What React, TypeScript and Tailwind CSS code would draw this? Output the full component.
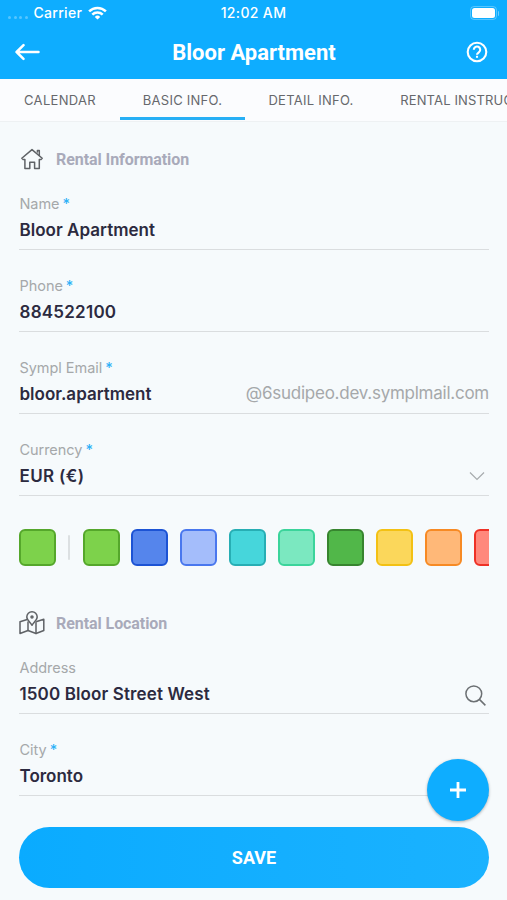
import React, { useState } from 'react';

interface Swatch {
    fill: string;
    border: string;
}

interface FieldProps {
    label: string;
    value: string;
    required?: boolean;
    valueClass?: string;
    children?: React.ReactNode;
}

const tabs = [
    { name: 'CALENDAR', className: 'w-[120px] tracking-[0.3px]' },
    { name: 'BASIC INFO.', className: 'w-[125px] tracking-[0.25px]' },
    { name: 'DETAIL INFO.', className: 'w-[132px] tracking-[0.25px]' },
    { name: 'RENTAL INSTRUCTIONS', className: 'w-[200px] tracking-[0.15px]' },
];

const swatches: Swatch[] = [
    { fill: 'bg-[#7dd24b]', border: 'border-[#55a72b]' },
    { fill: 'bg-[#5585ec]', border: 'border-[#1c53d4]' },
    { fill: 'bg-[#a4bdfb]', border: 'border-[#4977ee]' },
    { fill: 'bg-[#46d6db]', border: 'border-[#27aeb4]' },
    { fill: 'bg-[#7be8c0]', border: 'border-[#3bd49b]' },
    { fill: 'bg-[#51b749]', border: 'border-[#37852f]' },
    { fill: 'bg-[#fbd75b]', border: 'border-[#f3c114]' },
    { fill: 'bg-[#ffb878]', border: 'border-[#f78a24]' },
    { fill: 'bg-[#ff887c]', border: 'border-[#ee3126]' },
];

const HomeIcon = () => (
    <svg width="24" height="24" viewBox="0 0 24 24" fill="none" stroke="#5f6266" strokeWidth="1.5" strokeLinejoin="round" strokeLinecap="round" className="ml-px shrink-0">
        <path d="M1.8 11.2 12 2.6l10.2 8.6-1.2 1.3h-1.7v8.9h-4.7v-6.2h-4.8v6.2H4.9v-8.9H3.1z" />
        <path d="M17.4 5V3.4h1.9v5" />
    </svg>
);

const MapIcon = () => (
    <svg width="26" height="24" viewBox="0 0 26 24" fill="none" stroke="#5f6266" strokeWidth="1.5" strokeLinejoin="round" strokeLinecap="round" className="shrink-0">
        <path d="M8.2 8.5 1 10.8v11.7l8-3 8 3 7.8-3V8.2l-7 2.3" />
        <path d="M9 11v8.5M17 11.5v11" />
        <path d="M13 14.2C10.5 10.7 7.8 8.7 7.8 6a5.2 5.2 0 0 1 10.4 0c0 2.7-2.7 4.7-5.2 8.2z" fill="#f6fafc" />
        <circle cx="13" cy="6" r="1" />
    </svg>
);

const SectionTitle = ({ icon, title }: { icon: React.ReactNode; title: string }) => (
    <div className="flex h-[18px] items-center">
        <div className="flex w-[37px] shrink-0">{icon}</div>
        <h2 className="pt-px font-[Roboto,sans-serif] text-[16px] leading-[18px] font-bold tracking-[-0.07px] text-[#a9aaba]">{title}</h2>
    </div>
);

const Field = ({ label, value, required, valueClass, children }: FieldProps) => (
    <div className="mt-6 h-[58px] border-b border-[#dadddf]">
        <div className="h-[22px] pl-[0.5px] text-[14.5px] leading-[24px] tracking-[-0.05px] text-[#a5a8aa]">
            {label} {required && <span className="-ml-px font-medium text-[#2db1f7]">*</span>}
        </div>
        <div className="flex h-[31px] items-center justify-between">
            <span className={`pl-[0.5px] text-[17px] leading-[30px] font-semibold text-[#2c2a40] ${valueClass || ''}`}>{value}</span>
            {children}
        </div>
    </div>
);

const App: React.FC = () => {
    const [activeTab, setActiveTab] = useState<string>('BASIC INFO.');

    return (
        <div className="relative h-[900px] w-[507px] overflow-hidden bg-[#f6fafc] font-[Inter,sans-serif]">
            <header className="h-[79px] bg-[#0eadff] text-white">
                {/* Status bar */}
                <div className="grid h-[26px] grid-cols-3 items-center px-2">
                    <div className="flex items-center">
                        <div className="mt-2 mr-[6px] flex gap-[2.5px]">
                            <i className="size-[3px] rounded-full bg-white/30" />
                            <i className="size-[3px] rounded-full bg-white/30" />
                            <i className="size-[3px] rounded-full bg-white/30" />
                            <i className="size-[3px] rounded-full bg-white/30" />
                        </div>
                        <span className="text-[14px] leading-5 font-medium tracking-[0.3px]">Carrier</span>
                        <svg width="19" height="14" viewBox="0 0 19 14" fill="none" stroke="white" strokeWidth="2.5" className="ml-1.5">
                            <path d="M1.1 5.4a12 12 0 0 1 16.8 0" />
                            <path d="M4.3 8.7a7.4 7.4 0 0 1 10.4 0" />
                            <path d="M9.5 13.6 6.8 10.9a3.8 3.8 0 0 1 5.4 0z" fill="white" stroke="none" />
                        </svg>
                    </div>
                    <span className="text-center text-[14px] leading-5 font-medium tracking-[0.35px]">12:02 AM</span>
                    <div className="flex items-center justify-end gap-px">
                        <div className="h-[14px] w-[27px] rounded-[4px] border border-white/30 p-px">
                            <div className="h-full rounded-[2.5px] bg-white" />
                        </div>
                        <div className="h-[5px] w-[1.5px] rounded-r-full bg-white/40" />
                    </div>
                </div>
                {/* Title bar */}
                <div className="flex h-[52px] items-center justify-between pr-[19px] pl-[15px]">
                    <button className="w-[25px]">
                        <svg width="25" height="18" viewBox="0 0 25 18" fill="none" stroke="white" strokeWidth="2.5" strokeLinecap="round" strokeLinejoin="round">
                            <path d="M23.5 9h-22M8.5 2.2 1.6 9l6.9 6.8" />
                        </svg>
                    </button>
                    <h1 className="pl-[2px] font-[Roboto,sans-serif] text-[22px] font-bold">Bloor Apartment</h1>
                    <button>
                        <svg width="22" height="22" viewBox="0 0 22 22" fill="none" stroke="white" strokeWidth="2.1">
                            <circle cx="11" cy="11" r="9.3" />
                            <path d="M7.8 8.8a3.2 3.2 0 1 1 5.2 2.4c-1.2.9-2 1.3-2 2.5" />
                            <path d="M11 14.8v2" />
                        </svg>
                    </button>
                </div>
            </header>

            <nav className="flex h-[43px] overflow-hidden border-b border-[#eef1f3] bg-[#fbfcfe]">
                {tabs.map((tab) => (
                    <button
                        key={tab.name}
                        onClick={() => setActiveTab(tab.name)}
                        className={`h-[41px] shrink-0 border-b-[3px] pt-[5px] text-[13px] whitespace-nowrap text-[#66686c] ${tab.className} ${activeTab === tab.name ? 'border-[#27aff5]' : 'border-transparent'}`}
                    >
                        {tab.name}
                    </button>
                ))}
            </nav>

            <main className="pt-7 pr-[18px] pl-[19px]">
                <SectionTitle icon={<HomeIcon />} title="Rental Information" />
                <Field label="Name" value="Bloor Apartment" valueClass="tracking-[0.03px]" required />
                <Field label="Phone" value="884522100" valueClass="tracking-[0.25px]" required />
                <Field label="Sympl Email" value="bloor.apartment" required>
                    <span className="text-[17px] tracking-[-0.25px] text-[#a5a8aa]">@6sudipeo.dev.symplmail.com</span>
                </Field>
                <Field label="Currency" value="EUR (€)" valueClass="tracking-[0.35px]" required>
                    <svg width="16" height="10" viewBox="0 0 16 10" fill="none" stroke="#a7abad" strokeWidth="1.2" className="mr-1 mt-px">
                        <path d="m1 1.5 7 7 7-7" />
                    </svg>
                </Field>

                {/* Calendar color picker */}
                <div className="mt-[33px] flex h-[37px] items-center overflow-hidden">
                    <div className="size-[37px] shrink-0 rounded-[6px] border-2 border-[#55a72b] bg-[#7dd24b]" />
                    <div className="mr-[12.5px] ml-3 h-[25px] w-[2px] shrink-0 rounded-full bg-[#dce0e2]" />
                    <div className="flex gap-[11.9px]">
                        {swatches.map((s) => (
                            <div key={s.fill} className={`size-[37px] shrink-0 rounded-[6px] border-2 ${s.fill} ${s.border}`} />
                        ))}
                    </div>
                </div>

                <div className="mt-12">
                    <SectionTitle icon={<MapIcon />} title="Rental Location" />
                    <Field label="Address" value="1500 Bloor Street West" valueClass="tracking-[0.12px]">
                        <svg width="21" height="21" viewBox="0 0 21 21" fill="none" stroke="#6c7073" strokeWidth="1.5" className="mt-[3px] mr-[3px]">
                            <circle cx="8.8" cy="8.8" r="7.9" />
                            <path d="m14.4 14.4 6 6" />
                        </svg>
                    </Field>
                    <Field label="City" value="Toronto" required />
                </div>

                <button className="mt-[31px] h-[61px] w-full rounded-full bg-linear-to-r from-[#0aabff] to-[#1ab2ff] font-[Roboto,sans-serif] text-[18px] font-bold text-white">
                    SAVE
                </button>
            </main>

            <button className="absolute top-[759px] left-[427px] flex size-[62px] items-center justify-center rounded-full bg-[#0eadff] shadow-[0_1px_3px_rgba(0,0,0,0.3)]">
                <svg width="16" height="16" viewBox="0 0 16 16" stroke="white" strokeWidth="2.8">
                    <path d="M8 0v16M0 8h16" />
                </svg>
            </button>
        </div>
    );
};

export default App;
